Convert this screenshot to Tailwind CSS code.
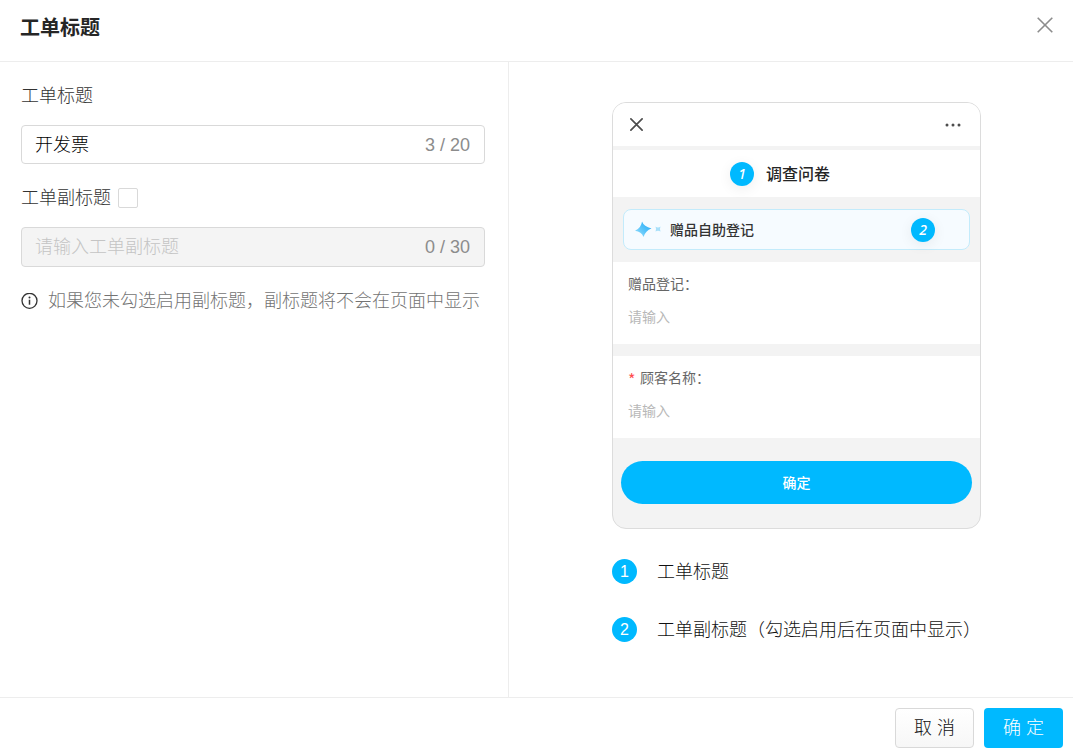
<!DOCTYPE html>
<html lang="zh-CN">
<head>
<meta charset="utf-8">
<meta name="viewport" content="width=device-width, initial-scale=1">
<title>工单标题</title>
<script src="https://cdn.jsdelivr.net/npm/@tailwindcss/browser@4"></script>
</head>
<body class="bg-white font-['Liberation_Sans','Noto_Sans_CJK_SC',sans-serif] text-lg/6 text-[#111]">
<div class="flex min-h-screen flex-col">
  <header class="flex items-center justify-between border-b border-[#ededed] pt-[14px] pr-5 pb-[18px] pl-5">
    <h1 class="text-xl/[29px] font-bold text-[#262626]">工单标题</h1>
    <button type="button" aria-label="关闭" class="-mt-2 text-[#8c8c8c]">
      <svg class="size-4" viewBox="0 0 16 16" fill="none" stroke="currentColor" stroke-width="1.6"><path d="M.7.7l14.6 14.6M15.3.7L.7 15.3"/></svg>
    </button>
  </header>

  <main class="grid grow grid-cols-[509fr_564fr]">
    <section class="border-r border-[#ededed] pt-[22px] pr-[23px] pl-[21px]">
      <label for="title" class="block font-light text-[#333]">工单标题</label>
      <div class="mt-[17px] flex h-[39px] items-center rounded-[4px] border border-[#d9d9d9] pr-[14px] pl-[13px]">
        <input id="title" type="text" value="开发票" class="min-w-0 grow font-light text-black outline-none">
        <span class="text-[#8c8c8c]">3 / 20</span>
      </div>
      <div class="mt-[22px] flex items-center gap-[7px]">
        <label for="subtitle-on" class="font-light text-[#333]">工单副标题</label>
        <input id="subtitle-on" type="checkbox" class="size-5 appearance-none rounded-[2px] border border-[#d9d9d9] bg-white checked:bg-[#00b9ff]">
      </div>
      <div class="mt-[17px] flex h-10 items-center rounded-[4px] border border-[#d9d9d9] bg-[#f4f4f4] pr-[14px] pl-[13px]">
        <input id="subtitle" type="text" disabled aria-label="工单副标题" placeholder="请输入工单副标题" class="min-w-0 grow font-light outline-none placeholder:text-[#c4c4c4]">
        <span class="text-[#8c8c8c]">0 / 30</span>
      </div>
      <p class="mt-[22px] flex items-center gap-[10px] whitespace-nowrap font-light text-[#737373]">
        <svg class="size-[17px] shrink-0 text-[#333]" viewBox="0 0 17 17" fill="none" stroke="currentColor"><circle cx="8.5" cy="7.8" r="7.5" stroke-width="1.3"/><path d="M8.5 6.7v5" stroke-width="1.5"/><circle cx="8.5" cy="4.500" r="1" fill="currentColor" stroke="none"/></svg>
        如果您未勾选启用副标题，副标题将不会在页面中显示
      </p>
    </section>

    <section class="flex justify-center pt-10 pl-[11px]">
      <div class="w-[369px]">
        <div class="overflow-hidden rounded-[14px] border border-[#dcdcdc] bg-[#f3f3f3] font-['Noto_Sans_CJK_SC',sans-serif] text-sm/5">
          <div class="flex h-[43px] items-center justify-between bg-white pr-[19px] pl-[17px] text-[#4d4d4d]">
            <svg class="size-[13px]" viewBox="0 0 13 13" fill="none" stroke="currentColor" stroke-width="1.7" stroke-linecap="round"><path d="M.9.9l11.2 11.2M12.1.9L.9 12.1"/></svg>
            <svg class="h-1 w-4" viewBox="0 0 16 4" fill="currentColor"><circle cx="2" cy="2" r="1.5"/><circle cx="8" cy="2" r="1.5"/><circle cx="14" cy="2" r="1.5"/></svg>
          </div>
          <div class="mt-1 flex h-[47px] items-center bg-white pl-[117px]">
            <span class="flex size-6 items-center justify-center rounded-full bg-[#00b9ff] font-['Noto_Sans'] text-sm font-medium text-white italic shadow-[0_3px_14px_rgba(0,0,0,0.07)]">1</span>
            <span class="pb-0.5 pl-3 text-base font-medium text-[#262626]">调查问卷</span>
          </div>
          <div class="px-[10px] py-3">
            <div class="flex h-[41px] items-center rounded-lg border border-[#c3ebfb] bg-[#f6fbff] pr-[34px] pl-[11px]">
              <svg class="h-[17px] w-7" viewBox="0 0 28 17">
                <defs><linearGradient id="spark" x1="1" y1="0" x2="0" y2="1"><stop offset="0" stop-color="#1fa6f5"/><stop offset=".5" stop-color="#56c3fa"/><stop offset="1" stop-color="#a5e3fb"/></linearGradient></defs>
                <path d="M7 .5Q8.800 5.500 16.500 7.500Q10.500 9.700 8.500 16Q6.500 10.700 0 9.800Q6.300 6.800 7 .5Z" fill="url(#spark)"/>
                <path d="M20.500 5.500Q23 7.300 25.500 5.500Q24.400 8 25.500 10.500Q23 8.900 20.500 10.500Q21.600 8 20.500 5.500Z" fill="#a8e0fa"/>
              </svg>
              <span class="grow pb-0.5 pl-[7px] font-medium text-[#333]">赠品自助登记</span>
              <span class="flex size-6 items-center justify-center rounded-full bg-[#00b9ff] font-['Noto_Sans'] text-sm font-medium text-white italic shadow-[0_3px_14px_rgba(0,0,0,0.07)]">2</span>
            </div>
          </div>
          <div class="flex h-[82px] flex-col gap-[13px] bg-white px-[15px] pt-[11px]">
            <label for="gift" class="text-[#666]">赠品登记：</label>
            <input id="gift" type="text" readonly placeholder="请输入" class="outline-none placeholder:text-[#b8b8b8]">
          </div>
          <div class="mt-3 flex h-[82px] flex-col gap-[13px] bg-white px-[15px] pt-[11px]">
            <label for="customer" class="flex gap-1 text-[#666]"><span class="w-2 text-base/6 text-[#ff4d4f]">*</span>顾客名称：</label>
            <input id="customer" type="text" readonly placeholder="请输入" class="-mt-1 outline-none placeholder:text-[#b8b8b8]">
          </div>
          <div class="px-2 pt-[23px] pb-6">
            <button type="button" class="h-[43px] w-full rounded-full bg-[#00b9ff] pb-0.5 font-medium text-white">确定</button>
          </div>
        </div>
        <ol class="mt-[30px] flex flex-col gap-[33px] whitespace-nowrap font-light">
          <li class="flex items-center gap-5"><span class="flex size-[25px] items-center justify-center rounded-full bg-[#00b9ff] text-base text-white">1</span>工单标题</li>
          <li class="flex items-center gap-5"><span class="flex size-[25px] items-center justify-center rounded-full bg-[#00b9ff] text-base text-white">2</span>工单副标题（勾选启用后在页面中显示）</li>
        </ol>
      </div>
    </section>
  </main>

  <footer class="flex justify-end gap-[10px] border-t border-[#ededed] pt-[10px] pr-[10px] pb-1 font-light">
    <button type="button" class="h-10 w-[79px] rounded-[4px] border border-[#d9d9d9] bg-linear-to-b from-white to-[#f7f7f7]">取 消</button>
    <button type="button" class="h-10 w-[79px] rounded-[4px] bg-[#00b9ff] text-white">确 定</button>
  </footer>
</div>
</body>
</html>
